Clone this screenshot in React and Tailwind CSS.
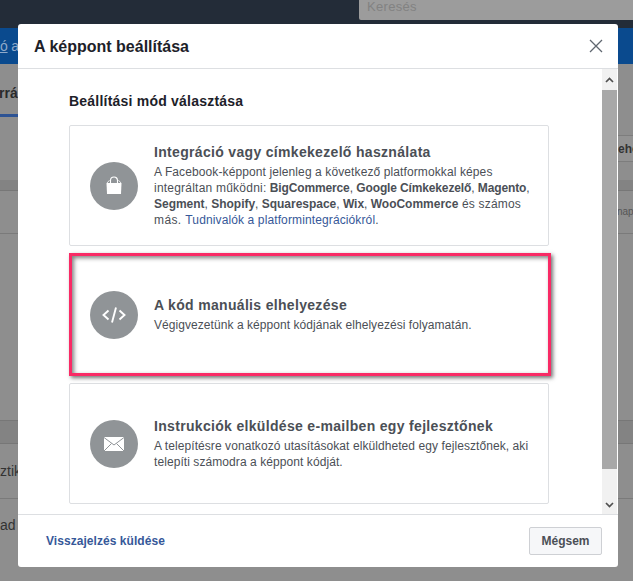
import React from "react";

const BagIcon = () => (
  <svg width="24" height="24" viewBox="0 0 24 24">
    <path d="M4.500 9h15L19 20H5z" fill="#fff" />
    <path d="M8.500 9V6.500a3.500 3.500 0 0 1 7 0V9" fill="none" stroke="#fff" strokeWidth="1.1" />
    <path d="M5 9l2.500-2.800M19 9l-2.500-2.800" fill="none" stroke="#fff" strokeWidth="0.8" />
  </svg>
);

const CodeIcon = () => (
  <svg width="24" height="24" viewBox="0 0 24 24" fill="none" stroke="#fff" strokeWidth="1.9">
    <path d="M6.500 7.500 1.500 12l5 4.500M17.500 7.500l5 4.500-5 4.500M14 4.500 10 19.500" />
  </svg>
);

const MailIcon = () => (
  <svg width="24" height="24" viewBox="0 0 24 24">
    <path d="M2 5h20v14H2z" fill="#fff" />
    <path d="M2 5.500 12 13l10-7.500M2 19l7.500-7.500M22 19l-7.500-7.500" fill="none" stroke="#909497" strokeWidth="1" />
  </svg>
);

const Circle = ({ children }) => (
  <div className="w-[48px] h-[48px] shrink-0 rounded-full bg-[#909497] flex items-center justify-center">{children}</div>
);

const B = ({ children }) => <b className="tracking-[-0.14px]">{children}</b>;
const B3 = ({ children }) => <b className="tracking-[-0.02px]">{children}</b>;

const Card = ({ icon, title, children }) => (
  <div className="h-[121px] w-[480px] border border-[#dddfe2] rounded-[2px] bg-white flex items-center pl-[20px] pr-[16px] gap-[16px]">
    <Circle>{icon}</Circle>
    <div className="min-w-0">
      <div className="text-[14px] leading-[18px] mb-[3px] font-bold tracking-[0.32px] text-[#4b4f56]">{title}</div>
      <div className="text-[12px] leading-[16px] text-[#4b4f56]">{children}</div>
    </div>
  </div>
);

export default function App() {
  return (
    <div className="relative w-[633px] h-[581px] overflow-hidden bg-[#8e8e8e] font-['Liberation_Sans',Arial,sans-serif]">
      {/* dimmed page behind the dialog */}
      <div className="h-[28px] bg-[#232c38] flex justify-end">
        <div className="w-[274px] h-[20px] bg-[#9c9c9c] rounded-bl-[2px] pl-[8px] text-[13px] leading-[13px] tracking-[0.3px] text-[#828282]">Keresés</div>
      </div>
      <div className="h-[36px] bg-[#0a4a8e] text-[14px] leading-[36px] text-[#8fa9c9] whitespace-nowrap -tracking-[0.2px]"><span className="underline">ó</span> a</div>
      <div className="h-[50px] flex items-end justify-between">
        <div className="text-[14px] leading-[17px] font-bold text-[#2a2a2a] mb-[12px] ml-[-1px]">rrá</div>
      </div>
      <div className="flex h-[3px]"><div className="w-[18px] bg-[#2d5394]" /></div>
      <div className="h-[63px] flex justify-end relative">
        <div className="w-[16px] mt-[18px] h-[27px] border-y border-l border-[#7d7d7d] bg-[#939393] text-[12px] font-bold leading-[26px] text-[#333] overflow-hidden whitespace-nowrap">eho</div>
      </div>
      <div className="h-[11px] bg-[#838383] border-b border-[#777]" />
      <div className="h-[43px] border-b border-[#7a7a7a] flex justify-end">
        <div className="w-[16px] text-[10px] leading-[42px] text-[#555] overflow-hidden whitespace-nowrap">nap</div>
      </div>
      <div className="h-[186px]" />
      <div className="h-[24px] bg-[#838383] border-y border-[#777]" />
      <div className="h-[55px] border-b border-[#7a7a7a] text-[14px] leading-[54px] text-[#333] pl-0 whitespace-nowrap">ztik</div>
      <div className="text-[14px] leading-[52px] text-[#333] whitespace-nowrap">ad</div>

      {/* dialog */}
      <div className="absolute left-[18px] top-[24px] w-[600px] h-[543px] bg-white rounded-[3px] flex flex-col overflow-hidden">
        <div className="h-[45px] shrink-0 border-b border-[#dddfe2] flex items-center justify-between pl-[16px] pr-[15px]">
          <div className="text-[16px] font-bold text-[#1d2129] leading-[20px] pt-[1px]">A képpont beállítása</div>
          <svg width="14" height="14" viewBox="0 0 14 14" fill="none" stroke="#606770" strokeWidth="1.3"><path d="M1 1l12 12M13 1 1 13" /></svg>
        </div>
        <div className="flex-1 flex min-h-0">
          <div className="w-[584px] pl-[51px] pt-[24px]">
            <div className="text-[14px] leading-[16px] font-bold text-[#1d2129] tracking-[0.22px] mb-[16px]">Beállítási mód választása</div>
            <div className="flex flex-col gap-[8px]">
              <Card icon={<BagIcon />} title="Integráció vagy címkekezelő használata">
                <span className="tracking-[0.107px]">A Facebook-képpont jelenleg a következő platformokkal képes</span> <span className="tracking-[0.22px]">integráltan működni:</span> <B>BigCommerce</B>, <B>Google Címkekezelő</B>, <B>Magento</B>, <B3>Segment</B3>, <B3>Shopify</B3>, <B3>Squarespace</B3>, <B3>Wix</B3>, <B3>WooCommerce</B3><span className="tracking-[0.2px]"> és számos</span> <span className="tracking-[0.4px]">más. </span><span className="text-[#365899] tracking-[0.12px]">Tudnivalók a platformintegrációkról</span>.
              </Card>
              <div className="relative">
                <Card icon={<CodeIcon />} title="A kód manuális elhelyezése">
                  <span className="tracking-[0.06px]">Végigvezetünk a képpont kódjának elhelyezési folyamatán.</span>
                </Card>
                <div className="absolute left-0 top-[-1px] w-[482px] h-[123px] border-[3px] border-[#f92a65] shadow-[2px_2px_4px_rgba(0,0,0,0.55),inset_2px_2px_4px_rgba(0,0,0,0.5)]" />
              </div>
              <Card icon={<MailIcon />} title="Instrukciók elküldése e-mailben egy fejlesztőnek">
                <span className="tracking-[0.075px]">A telepítésre vonatkozó utasításokat elküldheted egy fejlesztőnek, aki telepíti számodra a képpont kódját.</span>
              </Card>
            </div>
          </div>
          <div className="w-[15px] bg-[#f1f1f1] flex flex-col">
            <div className="h-[21px] flex items-center justify-center">
              <svg width="9" height="6" viewBox="0 0 9 6" fill="none" stroke="#505050" strokeWidth="1.7"><path d="M1 5l3.500-3.500L8 5" /></svg>
            </div>
            <div className="h-[379px] bg-[#a8a8a8]" />
            <div className="flex-1 flex items-end justify-center pb-[6px]">
              <svg width="9" height="6" viewBox="0 0 9 6" fill="none" stroke="#505050" strokeWidth="1.7"><path d="M1 1l3.500 3.500L8 1" /></svg>
            </div>
          </div>
        </div>
        <div className="h-[53px] shrink-0 border-t border-[#dddfe2] flex items-center justify-between pl-[28px] pr-[16px]">
          <div className="text-[12px] font-bold text-[#365899] tracking-[0.05px]">Visszajelzés küldése</div>
          <div className="w-[73px] h-[28px] rounded-[2px] border border-[#ced0d4] bg-[#f6f7f9] flex items-center justify-center text-[12px] font-bold text-[#4b4f56]">Mégsem</div>
        </div>
      </div>
    </div>
  );
}
